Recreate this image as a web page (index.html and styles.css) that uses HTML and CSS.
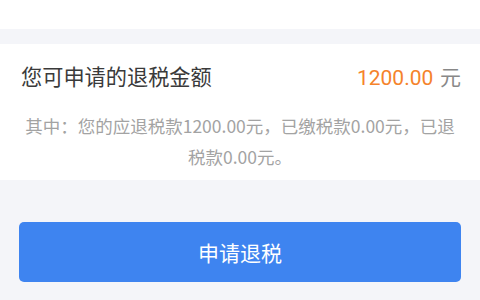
FILE: index.html
```html
<!DOCTYPE html>
<html lang="zh-CN">
<head>
<meta charset="utf-8">
<link rel="stylesheet" href="styles.css">
</head>
<body>
<div class="top"></div>
<section class="card">
  <div class="row">
    <span class="label">您可申请的退税金额</span>
    <span class="amount"><span class="num">1200.00</span> <span class="unit">元</span></span>
  </div>
  <p class="detail">其中：您的应退税款1200.00元，已缴税款0.00元，已退税款0.00元。</p>
</section>
<div class="actions">
  <button class="btn">申请退税</button>
</div>
</body>
</html>
```
FILE: styles.css
```css
html, body {
  margin: 0;
  padding: 0;
}
body {
  width: 480px;
  height: 300px;
  overflow: hidden;
  background: #f4f5f9;
  font-family: "Noto Sans CJK SC", "Noto Sans", sans-serif;
}
.top {
  height: 29px;
  background: #ffffff;
}
.card {
  margin-top: 15px;
  background: #ffffff;
  height: 136px;
  box-sizing: border-box;
  padding-top: 16px;
}
.row {
  display: flex;
  justify-content: space-between;
  align-items: center;
  padding: 0 19px 0 21px;
  height: 31px;
}
.label {
  font-size: 21.2px;
  color: #3a3a3a;
}
.amount {
  font-size: 21px;
  white-space: nowrap;
}
.num {
  font-family: Roboto, "Noto Sans", sans-serif;
  color: #f5832b;
}
.unit {
  color: #888888;
  margin-left: 2px;
}
.detail {
  margin: 19px 0 0;
  padding: 0 20px;
  font-size: 17.5px;
  line-height: 31px;
  color: #a3a3a3;
  text-align: center;
}
.actions {
  padding: 42px 19px 0;
}
.btn {
  display: block;
  width: 100%;
  height: 60px;
  border: none;
  border-radius: 5px;
  background: #3e84f0;
  color: #ffffff;
  font-family: "Noto Sans CJK SC", sans-serif;
  font-size: 21px;
  padding: 0;
}
```
